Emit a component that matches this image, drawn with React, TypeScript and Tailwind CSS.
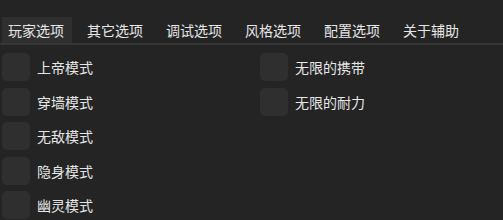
import React, { useState } from 'react';

const tabs = ['玩家选项', '其它选项', '调试选项', '风格选项', '配置选项', '关于辅助'];
const leftOptions = ['上帝模式', '穿墙模式', '无敌模式', '隐身模式', '幽灵模式'];
const rightOptions = ['无限的携带', '无限的耐力'];

const Option: React.FC<{ label: string }> = ({ label }) => {
  const [checked, setChecked] = useState(false);
  return (
    <label className="flex items-center h-[28px] cursor-pointer">
      <span
        onClick={() => setChecked(!checked)}
        className="w-[28px] h-[28px] rounded-[5px] bg-[#2f2f2f] flex items-center justify-center"
      >
        {checked && <span className="w-[14px] h-[14px] rounded-[3px] bg-[#d0d0d0]" />}
      </span>
      <span className="ml-[7px] text-[14px] leading-none text-[#e6e6e6]">{label}</span>
    </label>
  );
};

export default function App() {
  const [active, setActive] = useState(0);
  return (
    <div
      className="w-[503px] h-[220px] bg-[#242424] overflow-hidden"
      style={{ fontFamily: '"Noto Sans CJK SC", "Noto Sans", sans-serif' }}
    >
      <div className="pt-[17px] flex gap-[9px] pl-[2px] border-b-2 border-[#363636]">
        {tabs.map((t, i) => (
          <button
            key={t}
            onClick={() => setActive(i)}
            className={`h-[26px] px-[6px] w-[70px] text-[14px] leading-none text-[#e6e6e6] flex items-center ${
              i === active ? 'bg-[#2f2f2f]' : ''
            }`}
          >
            {t}
          </button>
        ))}
      </div>
      <div className="flex pt-[8px] pl-[2px]">
        <div className="w-[258px] flex flex-col gap-[6.5px]">
          {leftOptions.map((o) => (
            <Option key={o} label={o} />
          ))}
        </div>
        <div className="flex flex-col gap-[6.5px]">
          {rightOptions.map((o) => (
            <Option key={o} label={o} />
          ))}
        </div>
      </div>
    </div>
  );
}
